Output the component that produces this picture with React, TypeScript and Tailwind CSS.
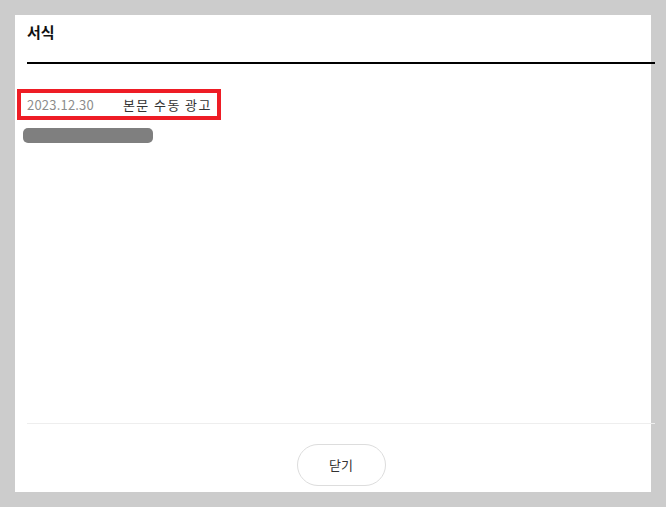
import React from 'react';

const FONT = { fontFamily: '"Noto Sans CJK KR", "Noto Sans", sans-serif' };

export default function App() {
  return (
    <div className="w-[666px] h-[507px] bg-[#cccccc] pt-[15px] pl-[15px] overflow-hidden" style={FONT}>
      {/* Modal panel */}
      <div className="w-[636px] h-[477px] bg-white pl-[12px] flex flex-col">
        <div className="w-[628px] flex flex-col flex-1">
          {/* Header */}
          <h2 className="pt-[7px] text-[15px] leading-[20px] font-bold text-[#111]">서식</h2>
          <div className="mt-[20px] h-[2px] bg-black" />

          {/* Body */}
          <div className="mt-[25px] -ml-[10px] w-[204px] h-[31px] border-4 border-[#ee1c25] flex items-center pl-[6px]">
            <span className="text-[13px] leading-[18px] text-[#8c8c8c] tracking-[0.2px] w-[96px] shrink-0">2023.12.30</span>
            <span className="text-[13px] leading-[18px] text-[#333] tracking-[1.4px] whitespace-nowrap">본문 수동 광고</span>
          </div>
          <div className="mt-[8px] -ml-[4px] w-[130px] h-[15px] rounded-[5px] bg-[#7f7f7f] blur-[0.6px]" />

          <div className="flex-1" />

          {/* Footer */}
          <div className="h-px bg-[#eeeeee]" />
          <div className="flex justify-center pt-[20px] pb-[6px]">
            <button className="w-[89px] h-[42px] rounded-full border border-[#dddddd] bg-white text-[13px] text-[#333]">
              닫기
            </button>
          </div>
        </div>
      </div>
    </div>
  );
}
